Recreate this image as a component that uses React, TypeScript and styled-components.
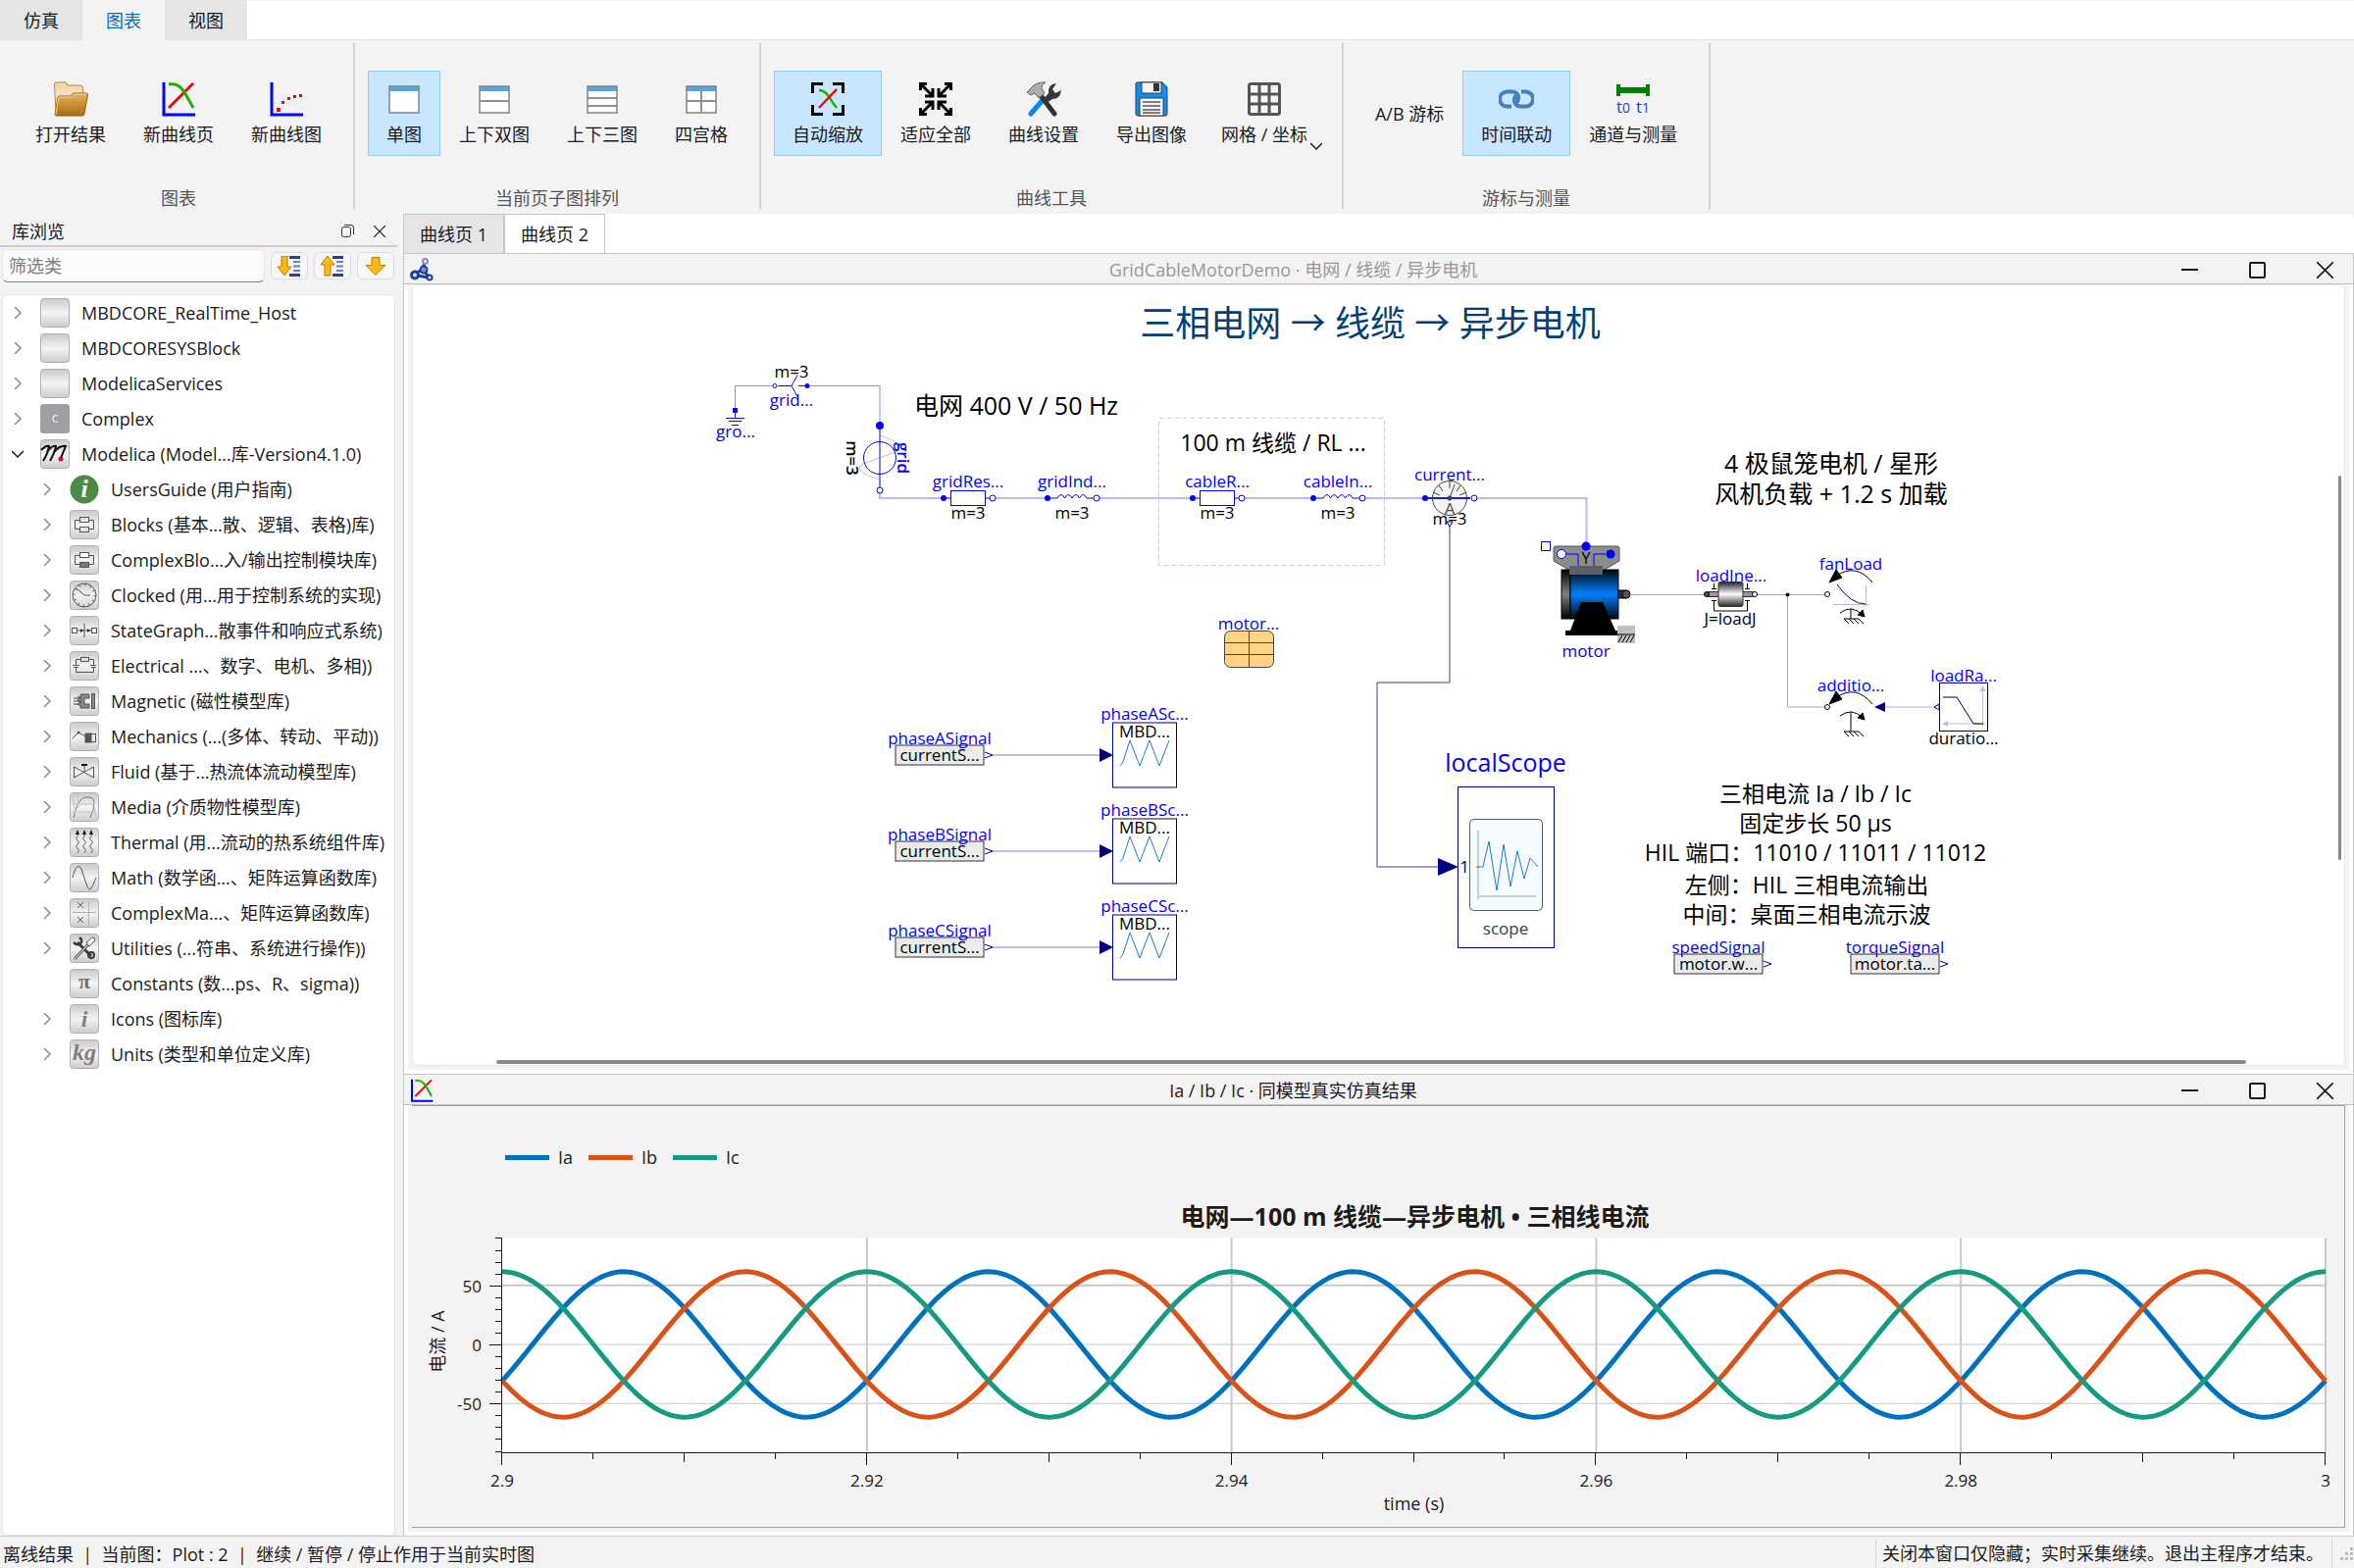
import React, { useLayoutEffect, useRef, useState } from "react";
import styled, { createGlobalStyle } from "styled-components";

const FONT = '"Open Sans", "Noto Sans CJK SC", sans-serif';

const GlobalStyle = createGlobalStyle`
  *, *::before, *::after { box-sizing: border-box; }
  body {
    margin: 0;
    background: #f3f3f3;
    color: #1b1b1b;
    font: 18px/24px ${FONT};
  }
  button, input { font: inherit; color: inherit; }
  h1, h2, h3, ul, p { margin: 0; padding: 0; font: inherit; }
  ul { list-style: none; }
  svg { display: block; }
`;

/* ---------- shell ---------- */

const Shell = styled.div`
  display: grid;
  grid-template-rows: auto auto minmax(0, 1fr) auto;
  height: 100vh;
  min-height: 1000px;
`;

const MenuTabs = styled.nav`
  display: flex;
  height: 41px;
  background: #ffffff;
  border-top: 1px solid #f3f3f3;
  border-bottom: 1px solid #e5e5e5;
`;

const MenuTab = styled.button<{ $active?: boolean }>`
  width: 84px;
  margin: -1px 0;
  padding: 0;
  border: 0;
  background: ${(p) => (p.$active ? "#f3f3f3" : "#e5e5e5")};
  color: ${(p) => (p.$active ? "#0f6cbd" : "#1b1b1b")};
`;

const Ribbon = styled.div`
  display: flex;
  height: 177px;
  padding: 3px 0 5px 4px;
  background: #f3f3f3;
`;

const RibbonGroup = styled.section`
  display: flex;
  flex-direction: column;
  justify-content: space-between;
  align-items: center;
  padding: 28px 13px 0;
  border-right: 2px solid #d4d4d4;
`;

const RibbonRow = styled.div`
  display: flex;
  align-items: stretch;
`;

const RibbonLabel = styled.h2`
  line-height: 22px;
  color: #555555;
`;

const Tool = styled.button<{ $on?: boolean; $menu?: boolean }>`
  position: relative;
  display: flex;
  flex-direction: column;
  align-items: center;
  justify-content: center;
  gap: 6px;
  height: 87px;
  padding: ${(p) => (p.$menu ? "0 21px 0 15px" : "0 18px")};
  border: 1px solid ${(p) => (p.$on ? "#99cbec" : "transparent")};
  background: ${(p) => (p.$on ? "#c7e6ff" : "transparent")};
  white-space: nowrap;
`;

const MenuArrow = styled.span`
  position: absolute;
  right: 6px;
  bottom: 5px;
`;

const Workspace = styled.div`
  display: grid;
  grid-template-columns: 405px minmax(0, 1fr);
  gap: 6px;
  min-height: 0;
`;

const StatusBar = styled.footer`
  display: flex;
  align-items: center;
  justify-content: space-between;
  height: 33px;
  padding: 3px 0 0 3px;
  border-top: 1px solid #d0d0d0;
`;

const StatusNote = styled.div`
  display: flex;
  align-items: center;
  gap: 8px;
  height: 30px;
`;

const StatusText = styled.p`
  height: 30px;
  padding: 2px 8px 0 6px;
  border: solid #d8d8d8;
  border-width: 0 1px;
`;

/* ---------- library dock ---------- */

const Dock = styled.aside`
  display: flex;
  flex-direction: column;
  min-height: 0;
`;

const DockHeader = styled.header`
  display: flex;
  align-items: center;
  justify-content: space-between;
  height: 34px;
  padding: 3px 6px 0 12px;
  border-bottom: 2px solid #cccccc;
`;

const IconButton = styled.button`
  display: inline-flex;
  align-items: center;
  justify-content: center;
  width: 24px;
  height: 24px;
  padding: 0;
  border: 0;
  background: transparent;
`;

const DockActions = styled.div`
  display: flex;
  gap: 9px;
`;

const FilterRow = styled.div`
  display: flex;
  align-items: center;
  gap: 6px;
  padding: 2px 3px 0 2px;
`;

const FilterInput = styled.input`
  flex: 1;
  min-width: 0;
  height: 34px;
  padding: 0 6px;
  border: 1px solid #e6e6e6;
  border-bottom: 1px solid #868686;
  border-radius: 6px;
  background: #fbfbfb;
  outline: 0;
  &::placeholder { color: #808080; opacity: 1; }
`;

const SortButton = styled.button`
  display: flex;
  align-items: center;
  justify-content: center;
  width: 38px;
  height: 28px;
  padding: 0;
  border: 1px solid #dedede;
  border-radius: 6px;
  background: #f7f7f7;
`;

const Tree = styled.ul`
  flex: 1;
  min-height: 0;
  overflow: hidden;
  margin: 12px 2px 0;
  border: 1px solid #e6e6e6;
  border-radius: 6px;
  background: #ffffff;
`;

const TreeRow = styled.li<{ $level: number }>`
  display: flex;
  align-items: center;
  height: 36px;
  padding-left: ${(p) => (p.$level === 0 ? 3 : 33)}px;
  white-space: nowrap;
`;

const Twisty = styled(IconButton)`
  margin-right: 11px;
`;

const TreeIcon = styled.span`
  margin-right: 12px;
`;

/* ---------- MDI windows ---------- */

const Main = styled.main`
  display: grid;
  grid-template-rows: auto minmax(0, 1fr) auto;
  min-width: 0;
  min-height: 0;
`;

const PageTabs = styled.nav`
  display: flex;
  height: 40px;
  border-radius: 0 6px 0 0;
  background: #ffffff;
`;

const PageTab = styled.button<{ $active?: boolean }>`
  width: 103px;
  padding: 0;
  border: 1px solid #c8c8c8;
  border-bottom: 0;
  background: ${(p) => (p.$active ? "#ffffff" : "#e5e5e5")};
`;

const Win = styled.section`
  display: flex;
  flex-direction: column;
  min-height: 0;
  border: 1px solid #c4c4c4;
  border-bottom: 0;
  background: #ffffff;
`;

const TitleBar = styled.header`
  display: flex;
  align-items: center;
  gap: 22px;
  height: 31px;
  padding: 2px 6px 0;
  border-bottom: 1px solid #c0c0c0;
  background: #f3f3f3;
`;

const WinTitle = styled.h2<{ $dim?: boolean }>`
  flex: 1;
  margin-left: -14px;
  text-align: center;
  white-space: nowrap;
  color: ${(p) => (p.$dim ? "#999999" : "#1b1b1b")};
`;

const WinButtons = styled.div`
  display: flex;
  gap: 23px;
`;

const WinButton = styled(IconButton)`
  width: 46px;
`;

const WinBody = styled.div`
  display: flex;
  flex: 1;
  flex-direction: column;
  min-height: 0;
  margin: 0 4px 4px;
  padding: 0 4px 4px;
  background: #f3f3f3;
`;

const Canvas = styled.div`
  position: relative;
  flex: 1;
  min-height: 0;
  border: 1px solid #e8e8e8;
  border-radius: 6px;
  background: #ffffff;
  & > svg { width: 100%; height: 100%; }
`;

const HScroll = styled.span`
  position: absolute;
  left: 4.3%;
  right: 5.1%;
  bottom: 1px;
  height: 4px;
  border-radius: 2px;
  background: #8a8a8a;
`;

const VScroll = styled.span`
  position: absolute;
  top: 24.4%;
  bottom: 26.3%;
  right: 3px;
  width: 3px;
  border-radius: 2px;
  background: #8a8a8a;
`;

const PlotFrame = styled.div`
  padding-top: 40px;
  border: 1px solid #a0a0a0;
  border-left: 0;
`;

const Legend = styled.ul`
  display: flex;
  gap: 16px;
  padding-left: 95px;
`;

const LegendItem = styled.li<{ $color: string }>`
  display: flex;
  align-items: center;
  gap: 9px;
  &::before {
    content: "";
    width: 45px;
    height: 5px;
    background: ${(p) => p.$color};
  }
`;

const PlotTitle = styled.h3`
  padding: 32px 16px 0 91px;
  font-size: 25px;
  font-weight: 700;
  line-height: 32px;
  text-align: center;
`;

/* ---------- ribbon icons ---------- */

const IconCurves = ({ size = 36 }: { size?: number }) => (
  <svg width={size} height={size} viewBox="0 0 36 36">
    <path d="M3 1v33h32" fill="none" stroke="#0000ff" strokeWidth="3" />
    <path d="M8 27L33 2" stroke="#ff0000" strokeWidth="3" />
    <path d="M8 3C20 1 23 9 33 27" fill="none" stroke="#22b000" strokeWidth="3" />
  </svg>
);

const IconFolder = () => (
  <svg width="36" height="36" viewBox="0 0 36 36">
    <defs>
      <linearGradient id="fold1" x1="0" y1="0" x2="0" y2="1">
        <stop offset="0" stopColor="#f0d3a0" />
        <stop offset=".4" stopColor="#f5e2c4" />
        <stop offset="1" stopColor="#c08a3c" />
      </linearGradient>
      <linearGradient id="fold2" x1="0" y1="0" x2="0" y2="1">
        <stop offset="0" stopColor="#e4b563" />
        <stop offset=".5" stopColor="#c88f34" />
        <stop offset="1" stopColor="#a86f17" />
      </linearGradient>
    </defs>
    <path d="M1.500 3q0-2 2-2h9q2 0 2 3h14q2 0 2 2v27H3z" fill="url(#fold1)" stroke="#b08a4c" />
    <path d="M2 34L5 17q0-2 2-2h11l3-3h13q1.500 0 1.500 2L32 33q0 2-2 2H3z" fill="url(#fold2)" stroke="#94611a" />
    <path d="M3 34L5.500 17.500q0-1.500 1.500-1.500h11.500l3-3H34" fill="none" stroke="#f3d59b" />
  </svg>
);

const IconDots = () => (
  <svg width="36" height="36" viewBox="0 0 36 36">
    <path d="M3 1v33h32" fill="none" stroke="#0000ff" strokeWidth="3" />
    <path d="M8 27h4v4H8zM13 20h3v3h-3zM19 16h3v3h-3zM25 14h3v3h-3zM31 13h3v3h-3z" fill="#ff0000" />
  </svg>
);

const IconLayout = ({ lines }: { lines: string }) => (
  <svg width="36" height="36" viewBox="0 0 36 36">
    <rect x="3" y="5" width="30" height="27" fill="#ffffff" />
    <rect x="3" y="5" width="30" height="5" fill="#55a6e0" />
    <path d={lines} stroke="#8a9298" strokeWidth="2" />
    <rect x="3" y="5" width="30" height="27" fill="none" stroke="#7c868c" strokeWidth="1.500" />
  </svg>
);

const IconAutoZoom = () => (
  <svg width="36" height="36" viewBox="0 0 36 36">
    <path d="M2.500 12V2.500H13M23 2.500h10.500V12M33.500 24v9.500H23M13 33.500H2.500V24" fill="none" stroke="#000" strokeWidth="3" />
    <path d="M9 9c9 0 11 10 18 18" fill="none" stroke="#22b000" strokeWidth="2.500" />
    <path d="M9 27L27 8" stroke="#ff0000" strokeWidth="2.500" />
  </svg>
);

const IconFit = () => (
  <svg width="36" height="36" viewBox="0 0 36 36">
    <g id="fitq">
      <path d="M3 3l11 11M15 7v8H7M2.500 9V2.500H9" fill="none" stroke="#000" strokeWidth="3" />
    </g>
    <use href="#fitq" transform="translate(36 0) scale(-1 1)" />
    <use href="#fitq" transform="translate(0 36) scale(1 -1)" />
    <use href="#fitq" transform="translate(36 36) scale(-1 -1)" />
  </svg>
);

const IconTools = () => (
  <svg width="36" height="36" viewBox="0 0 36 36">
    <path d="M5 33l13-15" stroke="#0a84f0" strokeWidth="5" strokeLinecap="round" />
    <path d="M14 13l15 20" stroke="#333333" strokeWidth="5" strokeLinecap="round" />
    <path d="M1 11l4-4q6-7 15-6-5 2-4 6l3 5-6 5-4-5-4 2z" fill="#a8aeb2" stroke="#666666" />
    <path d="M18 18l5-6q-1-9 8-10l-4 6 3 4 6-3q-1 9-9 9l-6 4z" fill="#383838" />
  </svg>
);

const IconSave = () => (
  <svg width="36" height="36" viewBox="0 0 36 36">
    <path d="M3 1h26l5 5v27q0 2-2 2H4q-2 0-2-2V2z" fill="#0a90f5" stroke="#3b3b3b" />
    <rect x="8" y="1" width="20" height="11" fill="#f5f5f5" stroke="#3b3b3b" />
    <rect x="20" y="2" width="6" height="8" fill="#333333" />
    <rect x="6" y="17" width="24" height="18" fill="#f5f5f5" stroke="#3b3b3b" />
    <path d="M9 21h18M9 25h18M9 29h18M9 32h18" stroke="#555555" strokeWidth="1.500" />
  </svg>
);

const IconGrid = () => (
  <svg width="36" height="36" viewBox="0 0 36 36">
    <rect x="2.500" y="2.500" width="31" height="31" rx="2" fill="#f7f7f7" stroke="#555555" strokeWidth="3" />
    <path d="M13 2v32M23 2v32M2 13h32M2 23h32" stroke="#555555" strokeWidth="3" />
  </svg>
);

const IconLink = () => (
  <svg width="36" height="36" viewBox="0 0 36 36">
    <g fill="none" stroke="#4682b8" strokeWidth="4">
      <path d="M13 25.500H8.500a7.500 7.500 0 0 1 0-15H14a6 6 0 0 1 6 7q0 3-3 5" />
      <path d="M23 10.500h4.500a7.500 7.500 0 0 1 0 15H22a6 6 0 0 1-6-7q0-3 3-5" />
    </g>
  </svg>
);

const IconMeasure = () => (
  <svg width="36" height="36" viewBox="0 0 36 36">
    <path d="M3 3v12M33 3v12" stroke="#008000" strokeWidth="4" />
    <rect x="3" y="6" width="30" height="6" fill="#008000" />
    <g fill="#2648a8" fontFamily={FONT} fontSize="17">
      <text x="1" y="32">t<tspan fontSize="14">0</tspan></text>
      <text x="21" y="32">t<tspan fontSize="14">1</tspan></text>
    </g>
  </svg>
);

/* ---------- small glyphs ---------- */

const Chevron = ({ open }: { open?: boolean }) => (
  <svg width="12" height="12" viewBox="0 0 12 12" fill="none" strokeWidth="1.500">
    {open ? <path d="M0 3l6 6 6-6" stroke="#1b1b1b" /> : <path d="M3 0l6 6-6 6" stroke="#8c8c8c" />}
  </svg>
);

const Cross = ({ size }: { size: number }) => (
  <svg width={size} height={size} viewBox="0 0 16 16">
    <path d="M0 0l16 16M16 0L0 16" stroke="#1b1b1b" strokeWidth="1.500" />
  </svg>
);

const ArrowGlyph = ({ kind }: { kind: "down" | "up" | "only" }) => {
  const arrow = kind === "up" ? "M7 0l7 9h-4v11H4V9H0z" : kind === "down" ? "M4 0h6v11h4L7 20 0 11h4z" : "M6 1h8v8h6L10 19 0 9h6z";
  return (
    <svg width={kind === "only" ? 20 : 24} height="21" viewBox={kind === "only" ? "0 0 20 20" : "0 0 24 21"}>
      <path d={arrow} fill="#ffb90f" stroke="#b87a00" />
      {kind !== "only" && <path d="M12 1.500h11M12 19.500h11" stroke="#1f3fb0" strokeWidth="3" />}
      {kind !== "only" && <path d="M16 6h7M16 10.500h7M16 15h7" stroke="#5b82d8" strokeWidth="2" />}
    </svg>
  );
};

/* ---------- library tree ---------- */

const serifGlyph = (t: string, size: number, y: number) => (
  <text x="15" y={y} textAnchor="middle" fontFamily='"Liberation Serif", serif' fontStyle="italic" fontWeight={700} fontSize={size} fill="#808080">{t}</text>
);

const glyphs: Record<string, React.ReactNode> = {
  plain: null,
  modelica: (
    <g fill="none" stroke="#111111" strokeWidth="2">
      <path d="M1 11q5-5 8-4-1 7-6 15M7 13q5-7 9-6-1 6-6 15M14 13q6-7 12-6-2 5-5 12" />
      <circle cx="21" cy="20" r="2.500" fill="#c8102e" stroke="none" />
    </g>
  ),
  blocks: (
    <g fill="none" stroke="#555555">
      <rect x="10.500" y="7.500" width="9" height="5" /><rect x="10.500" y="17.500" width="9" height="5" />
      <path d="M10 10.500H5.500v9H10M20 10.500h4.500v9H20" />
    </g>
  ),
  cblocks: (
    <g fill="none" stroke="#555555">
      <rect x="10.500" y="7.500" width="9" height="5" fill="#fff" /><rect x="10.500" y="17.500" width="9" height="5" fill="#777" />
      <path d="M10 10.500H5.500v9H10M20 10.500h4.500v9H20" />
    </g>
  ),
  clock: (
    <g fill="none" stroke="#555555">
      <circle cx="15" cy="15" r="12" /><path d="M7 8l8 7h6" />
      <circle cx="15" cy="15" r="10.500" strokeWidth="2" strokeDasharray="1 4.500" />
    </g>
  ),
  state: (
    <g fill="none" stroke="#555555">
      <rect x="2.500" y="12.500" width="5" height="5" /><rect x="22.500" y="12.500" width="5" height="5" />
      <path d="M8 15h14M15 8v14" /><path d="M11 13l3 2-3 2zM18 13l3 2-3 2z" fill="#222" stroke="none" />
    </g>
  ),
  electric: (
    <g fill="none" stroke="#555555">
      <rect x="11.500" y="6.500" width="8" height="4" /><path d="M11 8.500H6.500V14M20 8.500h4.500V14M3 14.500h7M4 16.500h5M6.500 17v4.500h18V17M21 14.500h6M22 16.500h5" />
    </g>
  ),
  magnet: (
    <g>
      <path d="M20 8h-9v14h9v-4h-5v-6h5z" fill="#888" stroke="#555" /><rect x="22.500" y="7.500" width="3" height="15" fill="#888" stroke="#555" />
      <path d="M4 12h6M4 15h7M4 18h6M8 10l3 2-3 2 3 2-3 2 3 2" fill="none" stroke="#444" />
    </g>
  ),
  mech: (
    <g fill="none" stroke="#555555">
      <path d="M3 17l6-6 9 5" /><rect x="16.500" y="12.500" width="10" height="8" /><rect x="16" y="12" width="6" height="9" fill="#555" /><circle cx="9" cy="11" r="1" fill="#333" />
    </g>
  ),
  fluid: (
    <g fill="none" stroke="#555555">
      <path d="M4.500 10v11l20-11v11zM15 15V8.500" /><path d="M12 8h6" stroke="#111" strokeWidth="2" />
    </g>
  ),
  media: (
    <g fill="none" stroke="#777777">
      <path d="M4 26Q8 6 16 5q9-1 9 5 0 8-4 16" /><path d="M3 3l3 20M8 2l1 14M3 12h22M3 20h22M25 14l2 12" stroke="#c4c4c4" />
    </g>
  ),
  thermal: (
    <g fill="none" stroke="#666666">
      <path d="M8 6v3q-3 2 0 4t0 4 0 4 0 5M15 6v3q-3 2 0 4t0 4 0 4 0 5M22 6v3q-3 2 0 4t0 4 0 4 0 5" /><path d="M8 2l2 5H6zM15 2l2 5h-4zM22 2l2 5h-4z" fill="#111" stroke="none" />
    </g>
  ),
  math: <path d="M3 15C6 2 10 0 13 9s6 22 9 17 3-7 5-11" fill="none" stroke="#555555" />,
  cmath: (
    <g fill="none" stroke="#666666">
      <path d="M19.500 3v24M3 14.500h24" stroke="#b0b0b0" /><path d="M8 4l6 6M14 4l-6 6M8 19l6 6M14 19l-6 6" />
    </g>
  ),
  utils: (
    <g fill="none">
      <path d="M8 9l14 14" stroke="#3c3c3c" strokeWidth="3" /><circle cx="22" cy="22" r="3" stroke="#3c3c3c" strokeWidth="2" />
      <path d="M4 9q4 4 7 1t-1-6" stroke="#3c3c3c" strokeWidth="2.500" />
      <path d="M5 26L19 11" stroke="#555" strokeWidth="3" /><path d="M5 26L19 11" stroke="#fff" />
      <path d="M17 9l6-5q3 0 3 3l-6 6z" fill="#fff" stroke="#555" />
    </g>
  ),
  pi: <text x="15" y="20" textAnchor="middle" fontFamily='"Liberation Serif", serif' fontSize="22" fontWeight="700" fill="#707070">π</text>,
  icons: serifGlyph("i", 24, 23),
  units: serifGlyph("kg", 24, 21),
};

const TileIcon = ({ name }: { name: string }) => {
  if (name === "info")
    return (
      <svg width="30" height="30" viewBox="0 0 30 30">
        <circle cx="15" cy="15" r="14.500" fill="#4a8c46" />
        <text x="15" y="23" textAnchor="middle" fontFamily='"Liberation Serif", serif' fontStyle="italic" fontWeight="700" fontSize="26" fill="#ffffff">i</text>
      </svg>
    );
  if (name === "complex")
    return (
      <svg width="30" height="30" viewBox="0 0 30 30">
        <rect width="30" height="30" rx="3" fill="#9f9fa3" />
        <text x="15" y="19" textAnchor="middle" fontFamily={FONT} fontSize="14" fill="#f0f0f0">c</text>
      </svg>
    );
  return (
    <svg width="30" height="30" viewBox="0 0 30 30">
      <defs>
        <linearGradient id="tile" x1="0" y1="0" x2="0" y2="1">
          <stop offset="0" stopColor="#c9c9c9" />
          <stop offset=".5" stopColor="#f4f4f4" />
          <stop offset="1" stopColor="#cccccc" />
        </linearGradient>
      </defs>
      <rect x=".5" y=".5" width="29" height="29" rx="3" fill="url(#tile)" stroke="#b0b0b0" />
      {glyphs[name]}
    </svg>
  );
};

interface LibNode { label: string; icon: string; level: 0 | 1; state?: "open" | "leaf" }

const NODES: LibNode[] = [
  { label: "MBDCORE_RealTime_Host", icon: "plain", level: 0 },
  { label: "MBDCORESYSBlock", icon: "plain", level: 0 },
  { label: "ModelicaServices", icon: "plain", level: 0 },
  { label: "Complex", icon: "complex", level: 0 },
  { label: "Modelica (Model...库-Version4.1.0)", icon: "modelica", level: 0, state: "open" },
  { label: "UsersGuide (用户指南)", icon: "info", level: 1 },
  { label: "Blocks (基本...散、逻辑、表格)库)", icon: "blocks", level: 1 },
  { label: "ComplexBlo...入/输出控制模块库)", icon: "cblocks", level: 1 },
  { label: "Clocked (用...用于控制系统的实现)", icon: "clock", level: 1 },
  { label: "StateGraph...散事件和响应式系统)", icon: "state", level: 1 },
  { label: "Electrical ...、数字、电机、多相))", icon: "electric", level: 1 },
  { label: "Magnetic (磁性模型库)", icon: "magnet", level: 1 },
  { label: "Mechanics (...(多体、转动、平动))", icon: "mech", level: 1 },
  { label: "Fluid (基于...热流体流动模型库)", icon: "fluid", level: 1 },
  { label: "Media (介质物性模型库)", icon: "media", level: 1 },
  { label: "Thermal (用...流动的热系统组件库)", icon: "thermal", level: 1 },
  { label: "Math (数学函...、矩阵运算函数库)", icon: "math", level: 1 },
  { label: "ComplexMa...、矩阵运算函数库)", icon: "cmath", level: 1 },
  { label: "Utilities (...符串、系统进行操作))", icon: "utils", level: 1 },
  { label: "Constants (数...ps、R、sigma))", icon: "pi", level: 1, state: "leaf" },
  { label: "Icons (图标库)", icon: "icons", level: 1 },
  { label: "Units (类型和单位定义库)", icon: "units", level: 1 },
];

const LibraryDock = () => (
  <Dock>
    <DockHeader>
      <h2>库浏览</h2>
      <DockActions>
        <IconButton aria-label="浮动">
          <svg width="13" height="13" viewBox="0 0 13 13" fill="none" stroke="#333">
            <rect x=".5" y="2.500" width="9" height="10" rx="2" />
            <path d="M3 .5h7q2.500 0 2.500 2.500v7" />
          </svg>
        </IconButton>
        <IconButton aria-label="关闭"><Cross size={12} /></IconButton>
      </DockActions>
    </DockHeader>
    <FilterRow>
      <FilterInput aria-label="筛选类" placeholder="筛选类" />
      <SortButton aria-label="展开"><ArrowGlyph kind="down" /></SortButton>
      <SortButton aria-label="折叠"><ArrowGlyph kind="up" /></SortButton>
      <SortButton aria-label="定位"><ArrowGlyph kind="only" /></SortButton>
    </FilterRow>
    <Tree>
      {NODES.map((n) => (
        <TreeRow key={n.label} $level={n.level}>
          <Twisty aria-label="展开节点" disabled={n.state === "leaf"}>
            {n.state !== "leaf" && <Chevron open={n.state === "open"} />}
          </Twisty>
          <TreeIcon><TileIcon name={n.icon} /></TreeIcon>
          {n.label}
        </TreeRow>
      ))}
    </Tree>
  </Dock>
);

/* ---------- schematic ---------- */

const BLUE = "#0000ff";
const NAVY = "#000080";
const WIRE = "#b8b8ff";

const Label = styled.text`
  font-family: ${FONT};
  text-anchor: middle;
`;

interface TProps { x: number; y: number; s?: number; c?: string; rot?: boolean; children: React.ReactNode }

/* Text centred on (x, y). */
const T = ({ x, y, s = 17, c = "#000000", rot, children }: TProps) => (
  <Label x={x} y={y + Math.round(s * 0.36)} fontSize={s} fontWeight={rot ? 600 : 400} fill={c} transform={rot ? `rotate(90 ${x} ${y})` : undefined}>{children}</Label>
);

const Pins = ({ x, r = 25 }: { x: number; r?: number }) => (
  <g>
    <circle cx={x - r} cy="508" r="3" fill={BLUE} />
    <circle cx={x + r} cy="508" r="3" fill="#fff" stroke={BLUE} />
  </g>
);

const Resistor = ({ x, name }: { x: number; name: string }) => (
  <g>
    <path d={`M${x - 25} 508h50`} stroke={BLUE} />
    <rect x={x - 17.5} y="500.500" width="35" height="15" fill="#fff" stroke={BLUE} />
    <Pins x={x} />
    <T x={x} y={491} c={BLUE}>{name}</T>
    <T x={x} y={523}>m=3</T>
  </g>
);

const Inductor = ({ x, name }: { x: number; name: string }) => (
  <g>
    <path d={`M${x - 25} 508h10q4-7 7.500 0q4-7 7.500 0q4-7 7.500 0q4-7 7.500 0h10`} fill="none" stroke={BLUE} />
    <Pins x={x} />
    <T x={x} y={491} c={BLUE}>{name}</T>
    <T x={x} y={523}>m=3</T>
  </g>
);

const Expression = ({ x, y, name, value }: { x: number; y: number; name: string; value: string }) => (
  <g>
    <rect x={x - 45} y={y - 10} width="90" height="20" fill="#ebebeb" stroke="#333" />
    <path d={`M${x + 46} ${y - 3}l8 3-8 3`} fill="#fff" stroke={NAVY} />
    <T x={x} y={y - 17} c={BLUE}>{name}</T>
    <T x={x} y={y}>{value}</T>
  </g>
);

const Phase = ({ y, id }: { y: number; id: string }) => (
  <g>
    <path d={`M1012 ${y}h110`} stroke="#c0c0e4" strokeWidth="2" />
    <rect x="1134.500" y={y - 33} width="65" height="66" fill="#fff" stroke={NAVY} />
    <path d={`M1121 ${y - 7}l14 7-14 7z`} fill={NAVY} />
    <path d={`M1142 ${y + 11}l3-4 7-22 10 26 10-26 10 26 10-26`} fill="none" stroke="#1a7ad4" />
    <T x={1167} y={y - 42} c={BLUE}>{`phase${id}Sc...`}</T>
    <T x={1167} y={y - 24}>MBD...</T>
    <Expression x={958} y={y} name={`phase${id}Signal`} value="currentS..." />
  </g>
);

/* y: flange height, arc: foot of the large arrow, stem: height of the small one. */
const Torque = ({ y, arc, stem }: { y: number; arc: number; stem: number }) => (
  <g fill="none" stroke="#000">
    <path d={`M1909 ${arc}q-17-21-38-6`} />
    <path d={`M1865 ${arc}l7-13 6 8z`} fill="#000" />
    <path d={`M1876 ${stem}q12-9 23 2`} />
    <path d={`M1901 ${stem + 4}l-7-2 5-5z`} fill="#000" />
    <circle cx="1863" cy={y} r="2.500" fill="#fff" />
  </g>
);

const Ground = ({ top, y }: { top: number; y: number }) => (
  <path d={`M1887 ${top}V${y}M1880 ${y}h15M1880 ${y}l5 5M1885 ${y}l5 5M1890 ${y}l5 5M1895 ${y}l5 5`} stroke="#000" fill="none" />
);

const Motor = () => (
  <g>
    <defs>
      <linearGradient id="mBlue" x1="0" y1="0" x2="0" y2="1">
        <stop offset="0" stopColor="#00080f" /><stop offset=".5" stopColor="#0080ff" /><stop offset="1" stopColor="#00080f" />
      </linearGradient>
      <linearGradient id="mGrey" x1="0" y1="0" x2="0" y2="1">
        <stop offset="0" stopColor="#000" /><stop offset=".5" stopColor="#808080" /><stop offset="1" stopColor="#000" />
      </linearGradient>
      <linearGradient id="mShaft" x1="0" y1="0" x2="0" y2="1">
        <stop offset="0" stopColor="#222" /><stop offset=".5" stopColor="#fff" /><stop offset="1" stopColor="#222" />
      </linearGradient>
    </defs>
    <rect x="1571.500" y="552.500" width="9" height="9" fill="none" stroke={BLUE} />
    <path d="M1586 557h63q2 0 2 2v13l-17 10h-33l-17-10v-13q0-2 2-2z" fill="#8c8c8c" stroke="#555" />
    <rect x="1592" y="581" width="9" height="50" fill="url(#mGrey)" stroke="#000" />
    <rect x="1601" y="581" width="49" height="50" fill="url(#mBlue)" stroke="#000" />
    <rect x="1600" y="577" width="34" height="9" fill="#606060" />
    <path d="M1597 565h12v12M1637 565h-12v12" fill="none" stroke={BLUE} />
    <circle cx="1592" cy="565" r="4.500" fill="#fff" stroke={BLUE} />
    <circle cx="1642" cy="565" r="4.500" fill={BLUE} />
    <circle cx="1617" cy="557" r="4.500" fill={BLUE} />
    <T x={1617} y={569} s={16}>Y</T>
    <rect x="1650" y="602" width="8" height="8" fill="#333" stroke="#000" />
    <circle cx="1658" cy="606" r="4" fill="#555" stroke="#000" />
    <path d="M1612 614h22l13 29h3v5h-54v-5h5z" fill="#000" />
    <rect x="1649" y="638" width="18" height="18" fill="#c0c0c0" />
    <path d="M1649 647h18M1650 655l4-7M1654 655l4-7M1658 655l4-7M1662 655l4-7" stroke="#000" />
    <T x={1617} y={664} c={BLUE}>motor</T>
  </g>
);

const Schematic = () => (
  <svg viewBox="421 291 1969 795" role="img" aria-label="GridCableMotorDemo">
    <T x={1397} y={330} s={36} c="#003f77">三相电网 → 线缆 → 异步电机</T>

    {/* supply */}
    <g fill="none" stroke="#8c8cff">
      <path d="M749.500 418V393.500H788M825 393.500h72V434" />
      <path d="M897 503v5h65M1014 508h52M1120 508h94" stroke={WIRE} strokeWidth="2" />
      <path d="M1268 508h70M1391 508h60M1505 508h112.500v46" stroke={WIRE} strokeWidth="2" />
    </g>
    <rect x="747" y="416" width="5" height="5" fill={BLUE} />
    <path d="M749.500 420v6M740 426.500h19M743 429.500h13M746 433.500h7M793 393.500h14M807 393.500l6-11M807 393.500l6 11M814 393.500h8" stroke={BLUE} fill="none" />
    <circle cx="790" cy="393.500" r="2" fill="#fff" stroke={BLUE} />
    <circle cx="823" cy="393.500" r="2.500" fill={BLUE} />
    <path d="M897 444q28 9 16 17l-33 12q-12 8 17 16" fill="none" stroke="#c0c0c0" />
    <path d="M897 434v63" stroke={BLUE} />
    <circle cx="897" cy="467" r="16.500" fill="none" stroke={BLUE} />
    <circle cx="897" cy="434" r="4" fill={BLUE} />
    <circle cx="897" cy="500" r="3" fill="#fff" stroke={BLUE} />
    <T x={807} y={379}>m=3</T>
    <T x={807} y={408} c={BLUE}>grid...</T>
    <T x={750} y={440} c={BLUE}>gro...</T>
    <T x={921} y={467} c={BLUE} rot>grid</T>
    <T x={869} y={467} rot>m=3</T>
    <T x={1036} y={414} s={25}>电网 400 V / 50 Hz</T>

    {/* cable */}
    <rect x="1181.500" y="426.500" width="230" height="150" fill="none" stroke="#bfd2e2" strokeDasharray="5 3" />
    <T x={1298} y={452} s={23}>100 m 线缆 / RL ...</T>
    <Resistor x={987} name="gridRes..." />
    <Inductor x={1093} name="gridInd..." />
    <Resistor x={1241} name="cableR..." />
    <Inductor x={1364} name="cableIn..." />

    {/* current sensor */}
    <circle cx="1478" cy="508" r="17.500" fill="#f5f5f5" stroke="#444" />
    <path d="M1478 491v7M1467 495l4 6M1489 495l-4 6M1461 502l7 3M1495 502l-7 3M1478 508l5-14" stroke="#444" />
    <path d="M1455 508h44" stroke="#2020c0" strokeWidth="2" />
    <circle cx="1478" cy="508" r="2.500" fill="#444" />
    <Pins x={1478} />
    <T x={1478} y={519} c="#55483c">A</T>
    <T x={1478} y={484} c={BLUE}>current...</T>
    <T x={1478} y={529}>m=3</T>
    <path d="M1478 537v159h-74v188h63" fill="none" stroke="#3c3ca0" />
    <path d="M1475 532h6l-3 5z" fill="#fff" stroke={NAVY} />

    {/* machine and load */}
    <Motor />
    <path d="M1662 606.500h76M1791 606.500h69M1822.500 606v115H1860" fill="none" stroke="#a8a8a8" />
    <circle cx="1822.500" cy="606.500" r="2" />
    <rect x="1742" y="603.500" width="45" height="5" fill="#999" stroke="#333" />
    <rect x="1752" y="593.500" width="25" height="25" rx="2" fill="url(#mShaft)" stroke="#333" />
    <circle cx="1740" cy="606" r="2.500" fill="#555" stroke="#000" />
    <circle cx="1789" cy="606" r="2.500" fill="#fff" stroke="#000" />
    <path d="M1745 600.500h5M1747.500 595v5M1779 600.500h5M1781.500 595v5M1745 612.500h5M1779 612.500h5M1747.500 612v11h34v-11" fill="none" stroke="#000" />
    <T x={1765} y={587} c={BLUE}>loadIne...</T>
    <T x={1764} y={631}>J=loadJ</T>

    <path d="M1902.500 597v21M1869 616.500h37" stroke="#c0c0c0" />
    <path d="M1873 596q14 20 29 20" fill="none" stroke={NAVY} />
    <Torque y={606} arc={594} stem={625} />
    <Ground top={621} y={631} />
    <T x={1887} y={575} c={BLUE}>fanLoad</T>

    <Torque y={721} arc={718} stem={730} />
    <Ground top={726} y={746} />
    <T x={1887} y={699} c={BLUE}>additio...</T>
    <path d="M1922 721h52" stroke="#b0b0e0" />
    <path d="M1911 721l11-5v10z" fill={NAVY} />
    <path d="M1972 721l5-3v6z" fill="#fff" stroke={NAVY} />
    <rect x="1977.500" y="696.500" width="49" height="49" fill="#fff" stroke={NAVY} />
    <path d="M2021.500 704v36M1983 738h41" stroke="#c0c0c0" />
    <path d="M2021.500 699l3 6h-6zM1980 738l6-3v6z" fill="#c0c0c0" />
    <path d="M1981 711h14l17 27h10" fill="none" stroke="#000" />
    <T x={2002} y={689} c={BLUE}>loadRa...</T>
    <T x={2002} y={753}>duratio...</T>

    <T x={1867} y={473} s={25}>4 极鼠笼电机 / 星形</T>
    <T x={1867} y={504} s={25}>风机负载 + 1.2 s 加载</T>

    {/* data record */}
    <rect x="1248.500" y="643.500" width="50" height="37" rx="6" fill="#ffd484" stroke="#444" />
    <path d="M1248 655.500h50M1248 667.500h50M1273.500 644v36" stroke="#444" />
    <T x={1273} y={636} c={BLUE}>motor...</T>

    <Phase y={770} id="A" />
    <Phase y={868} id="B" />
    <Phase y={966} id="C" />

    {/* local scope */}
    <T x={1535} y={778} s={25} c={BLUE}>localScope</T>
    <rect x="1486.500" y="802.500" width="98" height="164" fill="#fff" stroke={NAVY} />
    <path d="M1466 875l21 9-21 9z" fill={NAVY} />
    <T x={1493} y={884} c={NAVY}>1</T>
    <rect x="1498.500" y="835.500" width="74" height="93" rx="4" fill="#f5fafd" stroke="#555f66" />
    <path d="M1507 847v70M1506 914h60" stroke="#c8d0d8" strokeWidth="2" />
    <path d="M1505 884h7l6-26 8 50 7-47 7 43 7-36 7 28 6-21 8 9" fill="none" stroke="#1a7ad4" />
    <T x={1535} y={947} c="#333f48">scope</T>

    {/* notes */}
    <T x={1851} y={810} s={23}>三相电流 Ia / Ib / Ic</T>
    <T x={1851} y={840} s={23}>固定步长 50 µs</T>
    <T x={1851} y={870} s={23}>HIL 端口：11010 / 11011 / 11012</T>
    <T x={1842} y={903} s={23}>左侧：HIL 三相电流输出</T>
    <T x={1842} y={933} s={23}>中间：桌面三相电流示波</T>
    <Expression x={1752} y={983} name="speedSignal" value="motor.w..." />
    <Expression x={1932} y={983} name="torqueSignal" value="motor.ta..." />
  </svg>
);

/* ---------- chart ---------- */

const SERIES = [
  { name: "Ia", color: "#0072bd", phase: -30 },
  { name: "Ib", color: "#d95319", phase: -150 },
  { name: "Ic", color: "#169b80", phase: 90 },
];

const CHART_H = 301;
const LEFT = 92;
const RIGHT = 19;
const ZERO = 115;
const UNIT = 1.206;
const AXIS = 225;

const Chart = () => {
  const box = useRef<HTMLDivElement>(null);
  const [w, setW] = useState(1200);
  useLayoutEffect(() => {
    const el = box.current;
    if (!el) return;
    const measure = () => setW(el.clientWidth);
    measure();
    const ro = new ResizeObserver(measure);
    ro.observe(el);
    return () => ro.disconnect();
  }, []);

  const pw = w - LEFT - RIGHT;
  const y = (v: number) => ZERO - v * UNIT;
  const curve = (phase: number) => {
    const pts: string[] = [];
    for (let i = 0; i <= 500; i++) {
      const a = (i / 500) * 5 * 2 * Math.PI + (phase * Math.PI) / 180;
      pts.push(`${(LEFT + (pw * i) / 500).toFixed(1)},${y(61.5 * Math.sin(a)).toFixed(1)}`);
    }
    return pts.join(" ");
  };
  const xt = Array.from({ length: 21 }, (_, i) => i);
  const yt = Array.from({ length: 19 }, (_, i) => 90 - i * 10);
  const names = ["2.9", "2.92", "2.94", "2.96", "2.98", "3"];

  return (
    <div ref={box}>
      <svg width={w} height={CHART_H} role="img" aria-label="三相线电流">
        <rect x={LEFT} y={y(90)} width={pw} height={AXIS - y(90)} fill="#ffffff" />
        <g stroke="#c8c8c8">
          {[50, 0, -50].map((v) => <path key={v} d={`M${LEFT} ${y(v)}h${pw}`} strokeWidth={v === 50 ? 2 : 1} />)}
          {[1, 2, 3, 4, 5].map((i) => <path key={i} d={`M${LEFT + (pw * i) / 5} ${y(90)}V${AXIS}`} strokeWidth="2" />)}
        </g>
        {SERIES.map((s) => <polyline key={s.name} points={curve(s.phase)} fill="none" stroke={s.color} strokeWidth="5" />)}
        <g stroke="#1b1b1b" fill="none">
          <path d={`M${LEFT - 0.5} ${y(90)}V${y(-90)}M${LEFT} ${AXIS + 0.5}h${pw}`} />
          {xt.map((i) => (
            <path key={i} d={`M${Math.round(LEFT + (pw * i) / 20) - 0.5} ${AXIS}v${i % 4 === 0 ? 13 : i % 2 === 0 ? 10 : 7}`} />
          ))}
          {yt.map((v) => <path key={v} d={`M${LEFT} ${Math.round(y(v)) + 0.5}h${v % 50 === 0 ? -13 : -7}`} />)}
        </g>
        <g fontFamily={FONT} fontSize="17" fill="#1b1b1b">
          {[50, 0, -50].map((v) => <text key={v} x={LEFT - 21} y={y(v) + 7} textAnchor="end">{v}</text>)}
          {names.map((n, i) => <text key={n} x={LEFT + (pw * i) / 5} y="260" textAnchor="middle">{n}</text>)}
          <text x={LEFT + pw / 2} y="284" fontSize="18" textAnchor="middle">time (s)</text>
          <text x="27" y="118" fontSize="18" textAnchor="middle" transform="rotate(-90 27 112)">电流 / A</text>
        </g>
      </svg>
    </div>
  );
};

const Controls = () => (
  <WinButtons>
    <WinButton aria-label="最小化">
      <svg width="17" height="17"><path d="M0 8h17" stroke="#1b1b1b" strokeWidth="2" /></svg>
    </WinButton>
    <WinButton aria-label="最大化">
      <svg width="17" height="17"><rect x="1" y="1" width="15" height="15" rx="1" fill="none" stroke="#1b1b1b" strokeWidth="2" /></svg>
    </WinButton>
    <WinButton aria-label="关闭窗口"><Cross size={17} /></WinButton>
  </WinButtons>
);

export default function App() {
  return (
    <Shell>
      <GlobalStyle />
      <MenuTabs>
        <MenuTab>仿真</MenuTab>
        <MenuTab $active>图表</MenuTab>
        <MenuTab>视图</MenuTab>
      </MenuTabs>

      <Ribbon>
        <RibbonGroup>
          <RibbonRow>
            <Tool><IconFolder />打开结果</Tool>
            <Tool><IconCurves />新曲线页</Tool>
            <Tool><IconDots />新曲线图</Tool>
          </RibbonRow>
          <RibbonLabel>图表</RibbonLabel>
        </RibbonGroup>
        <RibbonGroup>
          <RibbonRow>
            <Tool $on><IconLayout lines="" />单图</Tool>
            <Tool><IconLayout lines="M3 20h30" />上下双图</Tool>
            <Tool><IconLayout lines="M3 17h30M3 25h30" />上下三图</Tool>
            <Tool><IconLayout lines="M3 20h30M18 9v23" />四宫格</Tool>
          </RibbonRow>
          <RibbonLabel>当前页子图排列</RibbonLabel>
        </RibbonGroup>
        <RibbonGroup>
          <RibbonRow>
            <Tool $on><IconAutoZoom />自动缩放</Tool>
            <Tool><IconFit />适应全部</Tool>
            <Tool><IconTools />曲线设置</Tool>
            <Tool><IconSave />导出图像</Tool>
            <Tool $menu>
              <IconGrid />网格 / 坐标
              <MenuArrow>
                <svg width="12" height="8" viewBox="0 0 12 8"><path d="M0 1l6 6 6-6" fill="none" stroke="#1b1b1b" strokeWidth="1.500" /></svg>
              </MenuArrow>
            </Tool>
          </RibbonRow>
          <RibbonLabel>曲线工具</RibbonLabel>
        </RibbonGroup>
        <RibbonGroup>
          <RibbonRow>
            <Tool>A/B 游标</Tool>
            <Tool $on><IconLink />时间联动</Tool>
            <Tool><IconMeasure />通道与测量</Tool>
          </RibbonRow>
          <RibbonLabel>游标与测量</RibbonLabel>
        </RibbonGroup>
      </Ribbon>

      <Workspace>
        <LibraryDock />
        <Main>
          <PageTabs>
            <PageTab>曲线页 1</PageTab>
            <PageTab $active>曲线页 2</PageTab>
          </PageTabs>
          <Win>
            <TitleBar>
              <svg width="24" height="24" viewBox="0 0 24 24" fill="none" stroke="#1f3f98">
                <path d="M15 5l-2 6M12 12l-6 4M13 12l6 7M8 18l10 2" strokeWidth="3" />
                <circle cx="15.500" cy="3.500" r="2.500" stroke="#8090b8" strokeWidth="2" />
                <circle cx="14" cy="12" r="3.500" fill="#6f8fd0" strokeWidth="2" />
                <circle cx="5" cy="17.500" r="3.500" fill="#dfe8f8" strokeWidth="3" />
                <circle cx="20" cy="20" r="2.500" strokeWidth="2" />
              </svg>
              <WinTitle $dim>GridCableMotorDemo · 电网 / 线缆 / 异步电机</WinTitle>
              <Controls />
            </TitleBar>
            <WinBody>
              <Canvas>
                <Schematic />
                <HScroll />
                <VScroll />
              </Canvas>
            </WinBody>
          </Win>
          <Win>
            <TitleBar>
              <IconCurves size={24} />
              <WinTitle>Ia / Ib / Ic · 同模型真实仿真结果</WinTitle>
              <Controls />
            </TitleBar>
            <WinBody>
              <PlotFrame>
                <Legend>
                  {SERIES.map((s) => <LegendItem key={s.name} $color={s.color}>{s.name}</LegendItem>)}
                </Legend>
                <PlotTitle>电网—100 m 线缆—异步电机 • 三相线电流</PlotTitle>
                <Chart />
              </PlotFrame>
            </WinBody>
          </Win>
        </Main>
      </Workspace>

      <StatusBar>
        <p>离线结果 &nbsp;|&nbsp; 当前图：Plot : 2 &nbsp;|&nbsp; 继续 / 暂停 / 停止作用于当前实时图</p>
        <StatusNote>
          <StatusText>关闭本窗口仅隐藏；实时采集继续。退出主程序才结束。</StatusText>
          <svg width="14" height="14" viewBox="0 0 14 14" fill="#bdbdbd">
            <path d="M10 0h3v3h-3zM5 5h3v3H5zM10 5h3v3h-3zM0 10h3v3H0zM5 10h3v3H5zM10 10h3v3h-3z" />
          </svg>
        </StatusNote>
      </StatusBar>
    </Shell>
  );
}
